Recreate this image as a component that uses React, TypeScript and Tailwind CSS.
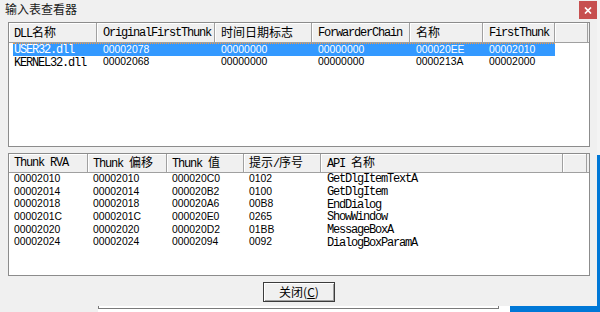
import React from "react";

const CJK = /([\u3400-\u9fff]+)/;

function Mixed({ text }: { text: string }) {
  const parts = text.split(CJK);
  return (
    <span className="whitespace-pre">
      {parts.map((p, i) =>
        CJK.test(p) ? (
          <span key={i} className="font-['Noto_Sans_CJK_SC',sans-serif] text-[12px] tracking-normal">
            {p}
          </span>
        ) : (
          <span key={i}>{p}</span>
        )
      )}
    </span>
  );
}

const mono = "font-['Liberation_Mono',monospace] text-[12px] tracking-[-1.2px]";
const sans = "font-['Liberation_Sans',Arial,sans-serif] text-[10.4px]";

type Col = { w: number; label: string; pl: number };

const topCols: Col[] = [
  { w: 88, label: "DLL名称", pl: 5 },
  { w: 118, label: "OriginalFirstThunk", pl: 6 },
  { w: 97, label: "时间日期标志", pl: 6 },
  { w: 98, label: "ForwarderChain", pl: 6 },
  { w: 73, label: "名称", pl: 6 },
  { w: 72, label: "FirstThunk", pl: 6 },
];

const dlls = [
  ["USER32.dll", "00002078", "00000000", "00000000", "000020EE", "00002010"],
  ["KERNEL32.dll", "00002068", "00000000", "00000000", "0000213A", "00002000"],
];

const bottomCols: Col[] = [
  { w: 79, label: "Thunk RVA", pl: 5 },
  { w: 79, label: "Thunk 偏移", pl: 5 },
  { w: 77, label: "Thunk 值", pl: 5 },
  { w: 77, label: "提示/序号", pl: 5 },
  { w: 242, label: "API 名称", pl: 6 },
];

const thunks = [
  ["00002010", "00002010", "000020C0", "0102", "GetDlgItemTextA"],
  ["00002014", "00002014", "000020B2", "0100", "GetDlgItem"],
  ["00002018", "00002018", "000020A6", "00B8", "EndDialog"],
  ["0000201C", "0000201C", "000020E0", "0265", "ShowWindow"],
  ["00002020", "00002020", "000020D2", "01BB", "MessageBoxA"],
  ["00002024", "00002024", "00002094", "0092", "DialogBoxParamA"],
];

function Header({ cols, trail, h }: { cols: Col[]; trail: number; h: number }) {
  return (
    <div className="flex shrink-0 border-b border-[#a0a0a0] bg-[#f0f0f0]" style={{ height: h }}>
      {cols.map((c) => (
        <div
          key={c.label}
          className={`flex shrink-0 items-center overflow-hidden whitespace-nowrap border-r border-[#a0a0a0] leading-none shadow-[inset_1px_1px_0_#ffffff] ${mono}`}
          style={{ width: c.w, paddingLeft: c.pl }}
        >
          <Mixed text={c.label} />
        </div>
      ))}
      <div
        className="shrink-0 border-r border-[#a0a0a0] shadow-[inset_1px_1px_0_#ffffff]"
        style={{ width: trail }}
      />
    </div>
  );
}

function CloseGlyph() {
  return (
    <svg width="8" height="7" viewBox="0 0 8 7">
      <path d="M1 0.5 L7 6.5 M7 0.5 L1 6.5" stroke="#ffffff" strokeWidth="1.7" />
    </svg>
  );
}

export default function App() {
  return (
    <div className="flex h-[312px] w-[600px] flex-col overflow-hidden bg-[#0078d7] text-black">
      <div className="flex h-[306px] shrink-0">
        <div className="flex w-[597px] shrink-0 flex-col bg-[#f0f0f0]">
          {/* title bar */}
          <div className="flex h-[22px] shrink-0 items-start justify-between">
            <span className="pl-[5px] pt-[1px] font-['Noto_Sans_CJK_SC',sans-serif] text-[12px] leading-[16px] text-[#1a1a1a]">
              输入表查看器
            </span>
            <div className="mt-[1px] flex h-[18px] w-[18px] items-center justify-center bg-[#c75050]">
              <CloseGlyph />
            </div>
          </div>

          <div className="flex flex-col pl-[8px] pr-[7px]">
            {/* DLL list */}
            <div className="flex h-[125px] flex-col border border-[#8c8c8c] bg-white">
              <Header cols={topCols} trail={33} h={20} />
              {dlls.map((row, r) => (
                <div key={r} className="flex h-[13px] shrink-0 pl-[4px]">
                  <div
                    className={`flex ${
                      r === 0
                        ? "border-t border-dotted border-[#ff9a3c] bg-[#3399ff] text-white"
                        : ""
                    }`}
                  >
                    {row.map((v, i) => (
                      <div
                        key={i}
                        className={`flex shrink-0 items-center whitespace-nowrap leading-none ${
                          i === 0 ? mono : sans
                        }`}
                        style={{
                          width: i === 0 ? topCols[0].w - 4 : topCols[i].w,
                          paddingLeft: i === 0 ? 1 : 6,
                        }}
                      >
                        {v}
                      </div>
                    ))}
                  </div>
                </div>
              ))}
            </div>

            {/* thunk list */}
            <div className="mt-[6px] flex h-[123px] flex-col border border-[#8c8c8c] bg-white">
              <Header cols={bottomCols} trail={24} h={19} />
              {thunks.map((row, r) => (
                <div key={r} className="flex h-[12.67px] shrink-0">
                  {row.map((v, i) => (
                    <div
                      key={i}
                      className={`flex shrink-0 items-center whitespace-nowrap leading-none ${
                        i === 4 ? mono : sans
                      }`}
                      style={{ width: bottomCols[i].w, paddingLeft: bottomCols[i].pl }}
                    >
                      {v}
                    </div>
                  ))}
                </div>
              ))}
            </div>

            <button className="mx-auto mt-[6px] flex h-[20px] w-[72px] items-center justify-center border border-[#3c3c3c] bg-[#f0f0f0] font-['Noto_Sans_CJK_SC',sans-serif] text-[12px] leading-none shadow-[inset_1px_1px_0_#ffffff,inset_-1px_-1px_0_#a0a0a0]">
              关闭(<span className="underline underline-offset-[1px]">C</span>)
            </button>
          </div>
        </div>
        <div className="flex w-[3px] flex-col">
          <div className="h-[155px] bg-[#f4f4f4]" />
          <div className="flex-1 bg-[#0078d7]" />
        </div>
      </div>

      {/* desktop strip below the window */}
      <div className="flex h-[6px] shrink-0">
        <div className="w-[98px] bg-[#f0f0f0]" />
        <div className="w-[412px] bg-white">
          <div className="h-[3px] w-[401px] border-x border-b border-[#7a7a7a]" />
        </div>
        <div className="flex-1 bg-[#0078d7]" />
      </div>
    </div>
  );
}
